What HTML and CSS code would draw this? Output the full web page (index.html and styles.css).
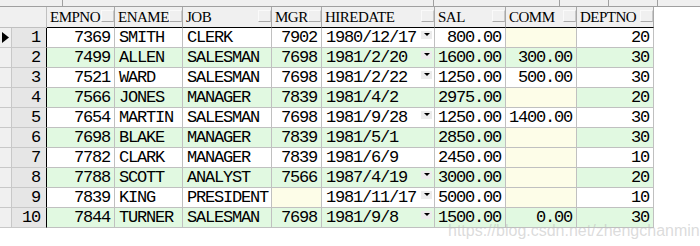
FILE: index.html
```html
<!DOCTYPE html>
<html>
<head>
<meta charset="utf-8">
<link rel="stylesheet" href="styles.css">
</head>
<body>
<div class="strip">
  <span class="tick t1"></span><span class="tick t2"></span><span class="tick t3"></span><span class="tick t4"></span><span class="tick t5"></span>
</div>
<div class="grid">
  <div class="corner"></div>
  <div class="h"><span>EMPNO</span><i class="btn"></i></div>
  <div class="h"><span>ENAME</span><i class="btn"></i></div>
  <div class="h"><span>JOB</span><i class="btn"></i></div>
  <div class="h"><span>MGR</span><i class="btn"></i></div>
  <div class="h"><span>HIREDATE</span><i class="btn"></i></div>
  <div class="h"><span>SAL</span><i class="btn"></i></div>
  <div class="h"><span>COMM</span><i class="btn"></i></div>
  <div class="h"><span>DEPTNO</span><i class="btn"></i></div>

  <div class="row odd">
    <div class="rh"><span class="ind cur"><svg width="7" height="11" viewBox="0 0 7 11"><path d="M0 0 L7 5.5 L0 11 Z" fill="#000"/></svg></span><span class="num">1</span></div>
    <div class="c r">7369</div><div class="c">SMITH</div><div class="c">CLERK</div><div class="c r">7902</div>
    <div class="c d"><span>1980/12/17</span><i class="dd"></i></div><div class="c r">800.00</div><div class="c null"></div><div class="c r">20</div>
  </div>
  <div class="row even">
    <div class="rh"><span class="ind"></span><span class="num">2</span></div>
    <div class="c r">7499</div><div class="c">ALLEN</div><div class="c">SALESMAN</div><div class="c r">7698</div>
    <div class="c d"><span>1981/2/20</span><i class="dd"></i></div><div class="c r">1600.00</div><div class="c r">300.00</div><div class="c r">30</div>
  </div>
  <div class="row odd">
    <div class="rh"><span class="ind"></span><span class="num">3</span></div>
    <div class="c r">7521</div><div class="c">WARD</div><div class="c">SALESMAN</div><div class="c r">7698</div>
    <div class="c d"><span>1981/2/22</span><i class="dd"></i></div><div class="c r">1250.00</div><div class="c r">500.00</div><div class="c r">30</div>
  </div>
  <div class="row even">
    <div class="rh"><span class="ind"></span><span class="num">4</span></div>
    <div class="c r">7566</div><div class="c">JONES</div><div class="c">MANAGER</div><div class="c r">7839</div>
    <div class="c d"><span>1981/4/2</span></div><div class="c r">2975.00</div><div class="c null"></div><div class="c r">20</div>
  </div>
  <div class="row odd">
    <div class="rh"><span class="ind"></span><span class="num">5</span></div>
    <div class="c r">7654</div><div class="c">MARTIN</div><div class="c">SALESMAN</div><div class="c r">7698</div>
    <div class="c d"><span>1981/9/28</span><i class="dd"></i></div><div class="c r">1250.00</div><div class="c r">1400.00</div><div class="c r">30</div>
  </div>
  <div class="row even">
    <div class="rh"><span class="ind"></span><span class="num">6</span></div>
    <div class="c r">7698</div><div class="c">BLAKE</div><div class="c">MANAGER</div><div class="c r">7839</div>
    <div class="c d"><span>1981/5/1</span></div><div class="c r">2850.00</div><div class="c null"></div><div class="c r">30</div>
  </div>
  <div class="row odd">
    <div class="rh"><span class="ind"></span><span class="num">7</span></div>
    <div class="c r">7782</div><div class="c">CLARK</div><div class="c">MANAGER</div><div class="c r">7839</div>
    <div class="c d"><span>1981/6/9</span></div><div class="c r">2450.00</div><div class="c null"></div><div class="c r">10</div>
  </div>
  <div class="row even">
    <div class="rh"><span class="ind"></span><span class="num">8</span></div>
    <div class="c r">7788</div><div class="c">SCOTT</div><div class="c">ANALYST</div><div class="c r">7566</div>
    <div class="c d"><span>1987/4/19</span><i class="dd"></i></div><div class="c r">3000.00</div><div class="c null"></div><div class="c r">20</div>
  </div>
  <div class="row odd">
    <div class="rh"><span class="ind"></span><span class="num">9</span></div>
    <div class="c r">7839</div><div class="c">KING</div><div class="c">PRESIDENT</div><div class="c null"></div>
    <div class="c d"><span>1981/11/17</span><i class="dd"></i></div><div class="c r">5000.00</div><div class="c null"></div><div class="c r">10</div>
  </div>
  <div class="row even">
    <div class="rh"><span class="ind"></span><span class="num">10</span></div>
    <div class="c r">7844</div><div class="c">TURNER</div><div class="c">SALESMAN</div><div class="c r">7698</div>
    <div class="c d"><span>1981/9/8</span><i class="dd"></i></div><div class="c r">1500.00</div><div class="c r">0.00</div><div class="c r">30</div>
  </div>
</div>
<div class="watermark">https://blog.csdn.net/zhengchanmin</div>
</body>
</html>
```

FILE: styles.css
```css
html, body {
  margin: 0;
  padding: 0;
  background: #ffffff;
}
body {
  position: relative;
  width: 700px;
  height: 246px;
  overflow: hidden;
}
.strip {
  position: relative;
  height: 7px;
  background: #f0f0f0;
  border-bottom: 1px solid #a0a0a0;
  box-sizing: border-box;
}
.tick {
  position: absolute;
  top: 0;
  width: 1px;
  height: 6px;
  background: #a0a0a0;
}
.t1 { left: 62px; }
.t2 { left: 433px; }
.t3 { left: 559px; }
.t4 { left: 608px; }
.t5 { left: 657px; }

.grid {
  display: grid;
  grid-template-columns: 47px 68px 68px 89px 50px 113px 71px 71px 77px;
  grid-template-rows: 21px;
  grid-auto-rows: 20px;
  width: 654px;
}
.row { display: contents; }

.corner {
  background: #f0f0f0;
  border-right: 1px solid #c0c0c0;
  border-bottom: 1px solid #c0c0c0;
}
.h {
  display: flex;
  align-items: flex-start;
  background: #f0f0f0;
  border-right: 1px solid #a8a8a8;
  border-bottom: 1px solid #000;
  padding-left: 3px;
  font-family: "Liberation Serif", serif;
  font-size: 15px;
  letter-spacing: -0.5px;
  color: #000;
  overflow: hidden;
}
.h span {
  line-height: 20px;
  flex: 1;
  white-space: nowrap;
}
.btn {
  flex: none;
  width: 13px;
  height: 12px;
  margin-top: 3px;
  box-sizing: border-box;
  border-top: 1px solid #fafafa;
  border-left: 1px solid #fafafa;
  border-bottom: 1px solid #a8a8a8;
  border-right: 1px solid #c8c8c8;
  background: #f0f0f0;
}

.rh {
  display: flex;
  background: #e6e6e6;
  border-right: 1px solid #000;
  border-bottom: 1px solid #c8c8c8;
  font-family: "Liberation Mono", monospace;
  font-size: 17px;
  letter-spacing: -1.2px;
  color: #000;
}
.ind {
  width: 12px;
  flex: none;
  background: #f0f0f0;
  border-right: 1px solid #c8c8c8;
  box-sizing: border-box;
  display: flex;
  align-items: center;
  justify-content: center;
}
.num {
  flex: 1;
  text-align: right;
  line-height: 19px;
  padding-right: 6px;
}

.c {
  display: flex;
  align-items: center;
  box-sizing: border-box;
  border-right: 1px solid #c0c0c0;
  border-bottom: 1px solid #c0c0c0;
  padding: 0 4px;
  font-family: "Liberation Mono", monospace;
  font-size: 17px;
  letter-spacing: -1.2px;
  color: #000;
  white-space: nowrap;
  overflow: hidden;
}
.odd .c { background: #ffffff; }
.even .c { background: #e1f9e1; }
.c.r { justify-content: flex-end; }
.row .c.null { background: #fdfde8; }
.c.d span { flex: 1; }
.dd {
  flex: none;
  align-self: flex-start;
  margin-top: 3px;
  margin-right: -2px;
  width: 11px;
  height: 8px;
  background: #ececec;
  position: relative;
}
.dd::after {
  content: "";
  position: absolute;
  left: 3px;
  top: 2px;
  border-left: 3px solid transparent;
  border-right: 3px solid transparent;
  border-top: 3px solid #000;
}

.watermark {
  position: absolute;
  left: 448px;
  top: 222px;
  font-family: "Liberation Sans", sans-serif;
  font-size: 16px;
  color: rgba(190, 190, 190, 0.55);
  white-space: nowrap;
}
```
